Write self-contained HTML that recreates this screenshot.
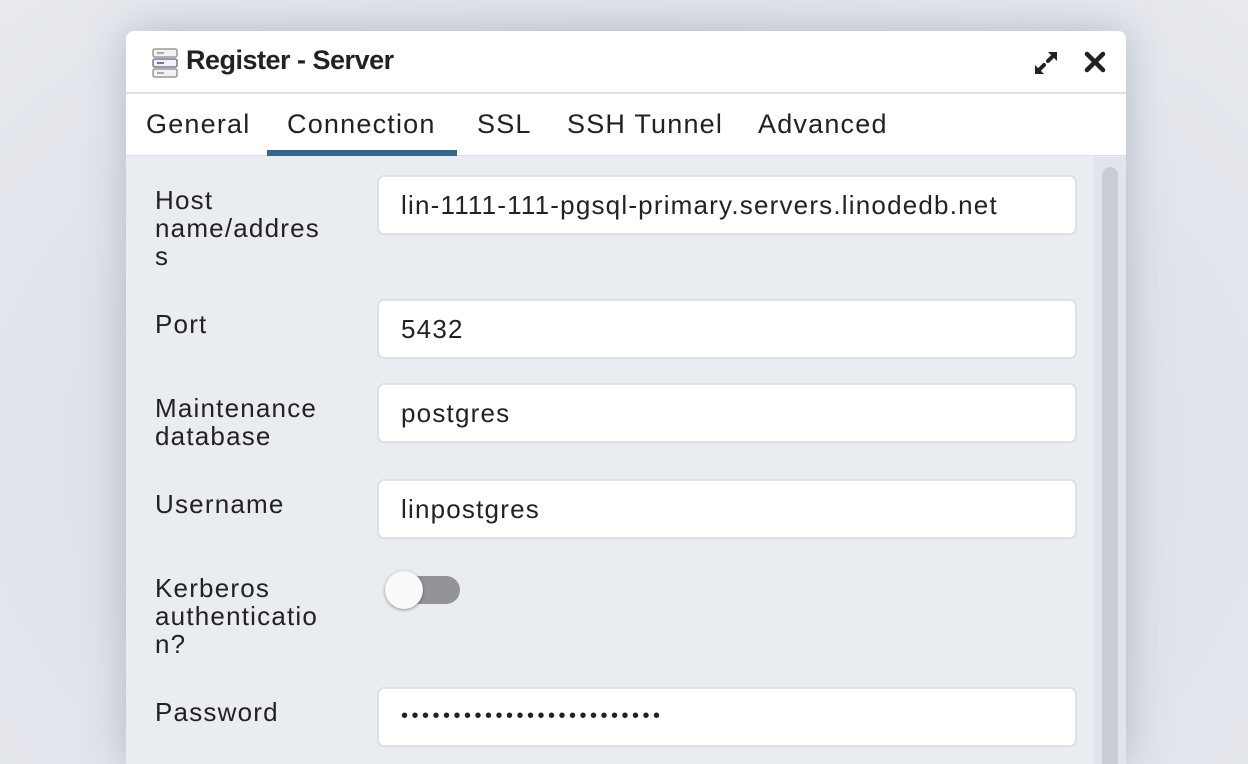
<!DOCTYPE html>
<html><head><style>
*{box-sizing:border-box;margin:0;padding:0}
html,body{width:1248px;height:764px;overflow:hidden}
body{background:#e4e7ee;font-family:"Liberation Sans",sans-serif;color:#222;position:relative}
.bg{position:absolute;inset:0;background:radial-gradient(ellipse at 50% 60%,#c5cad6 0%,#dde1e8 55%,#e8eaef 100%)}
.dlg{position:absolute;left:126px;top:31px;width:1000px;height:733px;background:#e9ecf1;border-radius:8px 8px 0 0;overflow:hidden;box-shadow:0 0 40px rgba(120,130,150,.45)}
.hdr{position:absolute;left:0;top:0;width:1000px;height:63px;background:#fff;border-bottom:2px solid #dde0e6}
.title{position:absolute;left:60px;top:14px;font-size:27px;font-weight:bold;letter-spacing:-0.5px}
.tabs{position:absolute;left:0;top:63px;width:1000px;height:62px;background:#fff;border-bottom:1px solid #dde0e6}
.tab{position:absolute;top:15px;font-size:27px;letter-spacing:1.2px;color:#222}
.ul{position:absolute;left:141px;top:56px;width:190px;height:6px;background:#326690}
.lbl{position:absolute;left:29px;font-size:26px;line-height:28px;letter-spacing:1.2px}
.inp{position:absolute;left:251px;width:700px;height:60px;background:#fff;border:2px solid #dde0e6;border-radius:7px;font-size:26px;padding:13px 0 0 22px;letter-spacing:1.2px}
.sb{position:absolute;left:968px;top:126px;width:32px;height:607px;background:#e1e4ea}
.thumb{position:absolute;left:976px;top:136px;width:16px;height:597px;background:#c9cdd6;border-radius:8px 8px 0 0}
</style></head><body>
<div class="bg"></div>
<div class="dlg">
 <div class="hdr">
  <svg style="position:absolute;left:26px;top:17px" width="26" height="30" viewBox="0 0 26 30">
   <rect x="1" y="1" width="24" height="8" rx="2" fill="#f2f2f2" stroke="#999" stroke-width="1.5"/>
   <rect x="1" y="11" width="24" height="8" rx="2" fill="#f2f2f2" stroke="#77779a" stroke-width="1.5"/>
   <rect x="1" y="21" width="24" height="8" rx="2" fill="#f2f2f2" stroke="#999" stroke-width="1.5"/>
   <rect x="5" y="4" width="7" height="2" fill="#aaa"/><rect x="5" y="14" width="7" height="2" fill="#77779a"/><rect x="5" y="24" width="7" height="2" fill="#aaa"/>
  </svg>
  <div class="title">Register - Server</div>
  <svg style="position:absolute;left:906px;top:18px" width="28" height="28" viewBox="0 0 28 28" fill="#222">
   <path d="M16 3 L25 3 L25 12 Z M3 16 L3 25 L12 25 Z"/>
   <path d="M20 8 L16 12 M12 16 L8 20" stroke="#222" stroke-width="4" stroke-linecap="round"/>
  </svg>
  <svg style="position:absolute;left:958px;top:20px" width="22" height="22" viewBox="0 0 22 22">
   <path d="M3 3 L19 19 M19 3 L3 19" stroke="#222" stroke-width="4.5" stroke-linecap="round"/>
  </svg>
 </div>
 <div class="tabs">
  <div class="tab" style="left:20px">General</div>
  <div class="tab" style="left:161px">Connection</div>
  <div class="tab" style="left:351px">SSL</div>
  <div class="tab" style="left:441px">SSH Tunnel</div>
  <div class="tab" style="left:632px">Advanced</div>
  <div class="ul"></div>
 </div>
 <div class="lbl" style="top:155px">Host<br>name/addres<br>s</div>
 <div class="inp" style="top:144px">lin-1111-111-pgsql-primary.servers.linodedb.net</div>
 <div class="lbl" style="top:279px">Port</div>
 <div class="inp" style="top:268px">5432</div>
 <div class="lbl" style="top:363px">Maintenance<br>database</div>
 <div class="inp" style="top:352px">postgres</div>
 <div class="lbl" style="top:459px">Username</div>
 <div class="inp" style="top:448px">linpostgres</div>
 <div class="lbl" style="top:543px">Kerberos<br>authenticatio<br>n?</div>
 <div style="position:absolute;left:262px;top:545px;width:72px;height:28px;border-radius:14px;background:#939399"></div>
 <div style="position:absolute;left:259px;top:540px;width:38px;height:38px;border-radius:50%;background:#fafafa;box-shadow:0 1px 3px rgba(0,0,0,.4)"></div>
 <div class="lbl" style="top:667px">Password</div>
 <div class="inp" style="top:656px;font-size:20px;padding-top:16px;letter-spacing:3.5px">•••••••••••••••••••••••••</div>
 <div class="sb"></div><div class="thumb"></div>
</div>
</body></html>
